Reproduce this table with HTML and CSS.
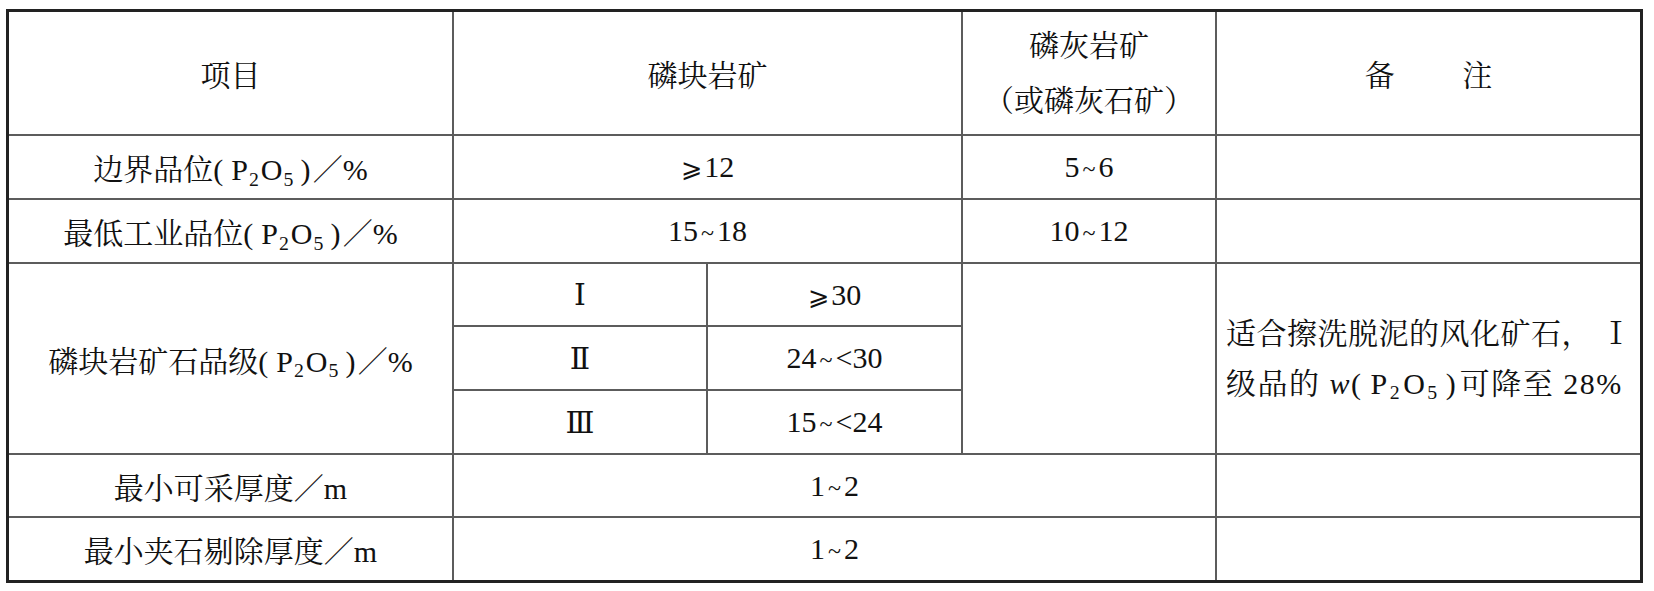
FILE: index.html
```html
<!DOCTYPE html>
<html lang="zh-CN">
<head>
<meta charset="utf-8">
<title>磷块岩矿工业指标</title>
<link rel="stylesheet" href="styles.css">
</head>
<body>
<div class="page">
  <div class="tbl">
    <div class="c"><span>项目</span></div>
    <div class="c span2"><span>磷块岩矿</span></div>
    <div class="c two"><span>磷灰岩矿<br>（或磷灰石矿）</span></div>
    <div class="c"><span>备<span class="gap"></span>注</span></div>

    <div class="c"><span>边界品位<span class="lp">(</span>P<sub>2</sub>O<sub>5</sub><span class="rp">)</span>／%</span></div>
    <div class="c span2"><span><span class="ge">⩾</span>12</span></div>
    <div class="c"><span>5<span class="t">~</span>6</span></div>
    <div class="c"></div>

    <div class="c"><span>最低工业品位<span class="lp">(</span>P<sub>2</sub>O<sub>5</sub><span class="rp">)</span>／%</span></div>
    <div class="c span2"><span>15<span class="t">~</span>18</span></div>
    <div class="c"><span>10<span class="t">~</span>12</span></div>
    <div class="c"></div>

    <div class="c rows3"><span>磷块岩矿石品级<span class="lp">(</span>P<sub>2</sub>O<sub>5</sub><span class="rp">)</span>／%</span></div>
    <div class="c rn"><span>Ⅰ</span></div>
    <div class="c"><span><span class="ge">⩾</span>30</span></div>
    <div class="c rows3"></div>
    <div class="c rows3 note"><span>适合擦洗脱泥的风化矿石，<span class="r1">Ⅰ</span><br><span class="l2">级品的 <i>w</i><span class="lp">(</span>P<sub>2</sub>O<sub>5</sub><span class="rp">)</span>可降至 28%</span></span></div>

    <div class="c rn"><span>Ⅱ</span></div>
    <div class="c"><span>24<span class="t">~</span>&lt;30</span></div>

    <div class="c rn"><span>Ⅲ</span></div>
    <div class="c"><span>15<span class="t">~</span>&lt;24</span></div>

    <div class="c"><span>最小可采厚度／m</span></div>
    <div class="c span3"><span>1<span class="t">~</span>2</span></div>
    <div class="c"></div>

    <div class="c"><span>最小夹石剔除厚度／m</span></div>
    <div class="c span3"><span>1<span class="t">~</span>2</span></div>
    <div class="c"></div>
  </div>
</div>
</body>
</html>
```

FILE: styles.css
```css
body {
  margin: 0;
  background: #fff;
  color: #111;
  font-family: "Liberation Serif", "Noto Serif CJK SC", "Noto Sans CJK SC", serif;
  font-size: 30px;
}

.page {
  padding: 9px 0 0 6px;
}

.tbl {
  display: grid;
  box-sizing: border-box;
  width: 1637px;
  border: 3px solid #222;
  background: #5c5c5c;
  gap: 2px;
  grid-template-columns: 443px 252px 253px 252px 423px;
  grid-template-rows: 122px 62px 62px 61px 62px 62px 61px 62px;
}

.c {
  background: #fff;
  display: flex;
  align-items: center;
  justify-content: center;
  text-align: center;
  white-space: nowrap;
  min-width: 0;
}

.span2 { grid-column: span 2; }
.span3 { grid-column: span 3; }
.rows3 { grid-row: span 3; }

.two {
  line-height: 55px;
}

.gap {
  display: inline-block;
  width: 2.25em;
}

.note {
  justify-content: flex-start;
  text-align: left;
  padding-left: 9px;
  line-height: 50px;
}

.note > span {
  letter-spacing: 0.5px;
}

.l2 {
  letter-spacing: 1.5px;
}

.r1 {
  margin-left: 0.3em;
}

sub {
  font-size: 0.66em;
  vertical-align: -0.3em;
  line-height: 0;
  margin: 0 2px 0 1px;
}

.lp { margin-right: 0.27em; }
.rp { margin-left: 0.17em; margin-right: 0.08em; }

.t {
  margin: 0 3px;
  font-size: 0.8em;
}

.ge {
  font-family: "DejaVu Serif", "DejaVu Sans", serif;
  font-size: 0.85em;
  margin-right: 2px;
}

.rn {
  font-family: "DejaVu Serif", "Liberation Serif", serif;
}
```
